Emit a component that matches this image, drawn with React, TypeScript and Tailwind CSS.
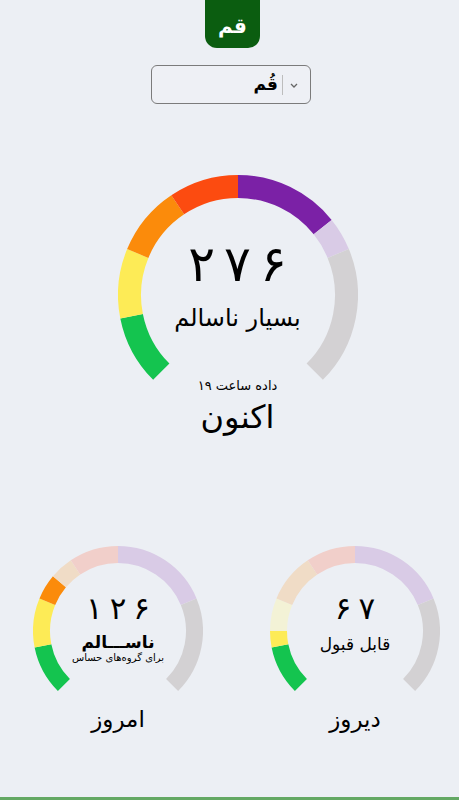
import React from 'react';

type Seg = { from: number; to: number; color: string; light: string };

const SEGMENTS: Seg[] = [
  { from: 0, to: 50, color: '#14c44f', light: '#f3f2d6' },
  { from: 50, to: 100, color: '#fdeb56', light: '#f3f2d6' },
  { from: 100, to: 150, color: '#fb8b0b', light: '#f0dcc6' },
  { from: 150, to: 200, color: '#fc4b10', light: '#f1cfca' },
  { from: 200, to: 300, color: '#7b21a6', light: '#d9cbe6' },
  { from: 300, to: 400, color: '#d3d1d3', light: '#d3d1d3' },
];

const MAX = 400;

const toXY = (cx: number, cy: number, r: number, deg: number) => {
  const rad = (deg * Math.PI) / 180;
  return [cx + r * Math.sin(rad), cy - r * Math.cos(rad)];
};

const arc = (cx: number, cy: number, r: number, a: number, b: number) => {
  const [x1, y1] = toXY(cx, cy, r, a);
  const [x2, y2] = toXY(cx, cy, r, b);
  const large = b - a > 180 ? 1 : 0;
  return `M ${x1} ${y1} A ${r} ${r} 0 ${large} 1 ${x2} ${y2}`;
};

const angle = (v: number) => -135 + (v / MAX) * 270;

const Gauge: React.FC<{ size: number; height: number; stroke: number; value: number }> = ({
  size,
  height,
  stroke,
  value,
}) => {
  const c = size / 2;
  const r = c - stroke / 2;
  const parts: { a: number; b: number; color: string }[] = [];
  SEGMENTS.forEach((s) => {
    if (value >= s.to) parts.push({ a: s.from, b: s.to, color: s.color });
    else if (value <= s.from) parts.push({ a: s.from, b: s.to, color: s.light });
    else {
      parts.push({ a: s.from, b: value, color: s.color });
      parts.push({ a: value, b: s.to, color: s.light });
    }
  });
  return (
    <svg width={size} height={height} viewBox={`0 0 ${size} ${height}`} className="block">
      {parts.map((p, i) => (
        <path
          key={i}
          d={arc(c, c, r, angle(p.a), angle(p.b))}
          fill="none"
          stroke={p.color}
          strokeWidth={stroke}
          strokeLinecap="butt"
        />
      ))}
    </svg>
  );
};

// digits drawn one by one so they keep the wide spacing of the original
const Digits: React.FC<{ text: string; className: string }> = ({ text, className }) => (
  <div dir="ltr" className={`flex ${className}`}>
    {text.split('').map((d, i) => (
      <span key={i}>{d}</span>
    ))}
  </div>
);

const SmallGauge: React.FC<{
  value: number;
  digits: string;
  label: React.ReactNode;
  title: string;
}> = ({ value, digits, label, title }) => (
  <div className="flex w-[170px] flex-col items-center">
    <div className="relative">
      <Gauge size={170} height={150} stroke={17} value={value} />
      <div className="absolute inset-x-0 top-[42px] flex flex-col items-center text-black">
        <Digits text={digits} className="gap-[7px] text-[31px] leading-[40px]" />
        {label}
      </div>
    </div>
    <div className="mt-[6px] text-[23px] leading-[34px] text-black">{title}</div>
  </div>
);

const App: React.FC = () => {
  return (
    <div
      dir="rtl"
      className="flex h-[800px] w-full flex-col overflow-hidden bg-[#eceff4]"
      style={{ fontFamily: '"DejaVu Sans", sans-serif' }}
    >
      {/* City tab */}
      <div className="ml-[6px] flex h-[48px] w-[55px] items-center justify-center self-center rounded-b-[12px] bg-[#0b5d10] pt-[4px] text-[20px] font-bold text-white">
        قم
      </div>

      {/* City select */}
      <div className="ml-[3px] mt-[17px] flex h-[39px] w-[160px] items-center self-center rounded-[6px] border border-[#7b7b7b] bg-[#eef0f5] pr-[10px]">
        <svg width="12" height="12" viewBox="0 0 12 12">
          <path d="M3 5 L6 8 L9 5" fill="none" stroke="#666" strokeWidth="1.3" />
        </svg>
        <span className="mr-[5px] h-[20px] w-px bg-[#bdbdbd]" />
        <span className="mr-[4px] text-[17px] font-bold text-black">قُم</span>
      </div>

      {/* Current gauge */}
      <div className="ml-[16px] mt-[71px] flex flex-col items-center self-center">
        <div className="relative">
          <Gauge size={240} height={208} stroke={23} value={276} />
          <div className="absolute inset-x-0 top-[60px] flex flex-col items-center text-black">
            <Digits text="۲۷۶" className="gap-[9px] text-[50px] leading-[58px]" />
            <span className="mt-[8px] text-[24px] leading-[34px]">بسیار ناسالم</span>
          </div>
        </div>
        <div className="-mt-[6px] text-[13px] leading-[18px] text-black">داده ساعت ۱۹</div>
        <div className="text-[32px] leading-[44px] text-black">اکنون</div>
      </div>

      {/* Today / yesterday */}
      <div className="mt-[107px] flex justify-between pl-[33px] pr-[19px]">
        <SmallGauge
          value={67}
          digits="۶۷"
          title="دیروز"
          label={<span className="mt-[4px] text-[17px] leading-[24px]">قابل قبول</span>}
        />
        <SmallGauge
          value={126}
          digits="۱۲۶"
          title="امروز"
          label={
            <>
              <span className="mt-[4px] text-[17px] font-semibold leading-[20px]">ناســـالم</span>
              <span className="text-[10px] leading-[12px]">برای گروه‌های حساس</span>
            </>
          }
        />
      </div>

      <div className="mt-auto h-[3px] w-full bg-[#63a863]" />
    </div>
  );
};

export default App;
